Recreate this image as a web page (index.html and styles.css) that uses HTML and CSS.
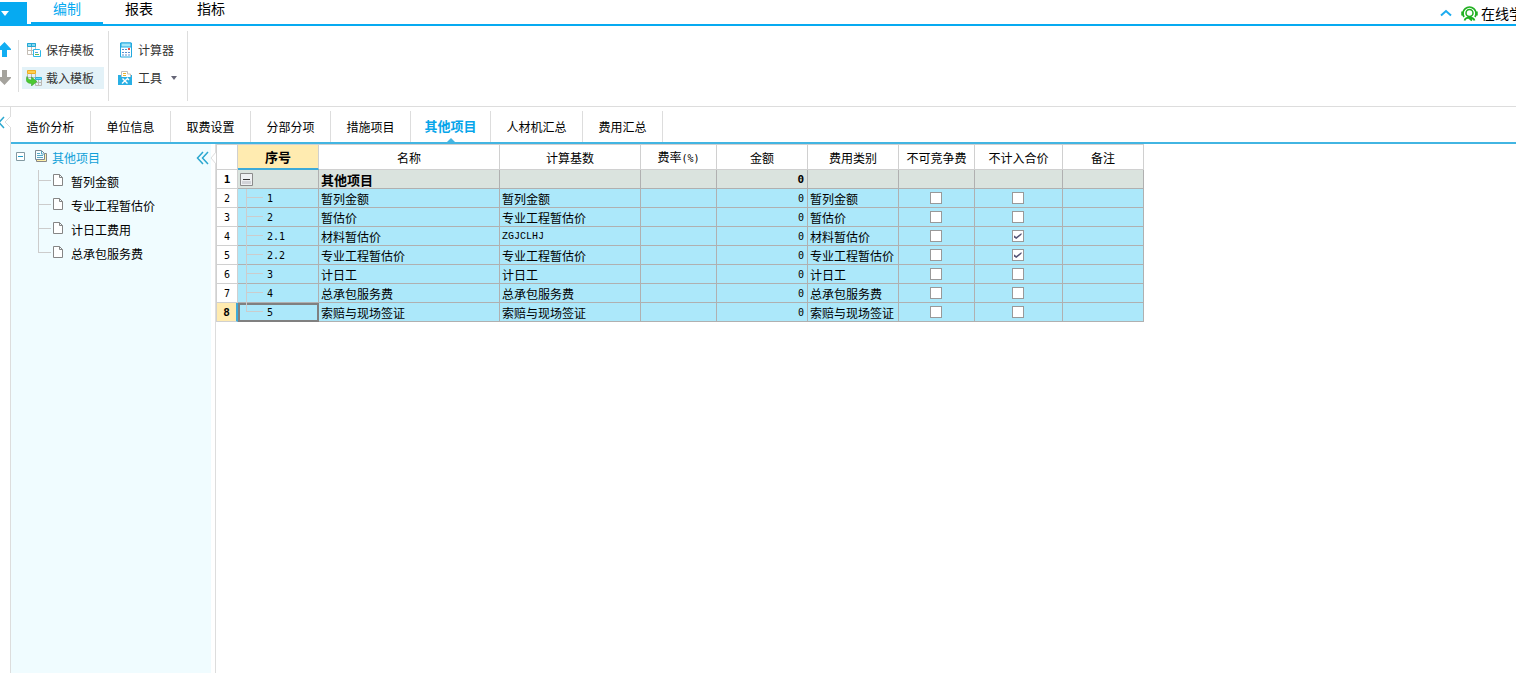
FILE: index.html
```html
<!DOCTYPE html>
<html lang="zh-CN">
<head>
<meta charset="utf-8">
<title>其他项目</title>
<link rel="stylesheet" href="styles.css">
</head>
<body>
<header class="menubar">
  <button class="app-menu" aria-label="菜单"><svg width="9" height="5" viewBox="0 0 9 5"><path d="M0 0h8L4 5z" fill="#fff"/></svg></button>
  <nav class="menu-tabs">
    <button class="menu-tab active">编制</button>
    <button class="menu-tab">报表</button>
    <button class="menu-tab">指标</button>
  </nav>
  <button class="collapse" aria-label="收起"><svg width="12" height="8" viewBox="0 0 12 8"><path d="M1 6.500L6 2l5 4.500" fill="none" stroke="#1cacf0" stroke-width="2"/></svg></button>
  <button class="help">
    <svg width="17" height="17" viewBox="0 0 17 17" fill="none" stroke="#20b020"><path d="M3 12A6.500 6.500 0 1 1 14 12" stroke-width="1.800"/><path d="M1.500 6.500v4M15.500 6.500v4" stroke-width="2.500"/><circle cx="8.500" cy="8" r="3.500" stroke-width="1.500"/><path d="M3.500 15.500c1-3 3-3 5-3s4 0 5 3M8 13l3 2.500" stroke-width="1.800"/></svg>
    <span>在线学</span>
  </button>
</header>

<div class="ribbon">
  <div class="group move">
    <button aria-label="上移"><svg width="11" height="15" viewBox="0 0 11 15"><path d="M4.500 0L11 7v1H7v7H2V8H0V4.500z" fill="#12aef2"/></svg></button>
    <button aria-label="下移"><svg width="11" height="15" viewBox="0 0 11 15"><path d="M4.500 15L11 8V7H7V0H2v7H0v3.500z" fill="#a5a39d"/></svg></button>
  </div>
  <div class="group templates">
    <button class="tool">
      <svg width="16" height="16" viewBox="0 0 16 16"><path d="M1.500 4v8.500H7M5.500 4v8.500M1 8.500h8M9.500 4v3" fill="none" stroke="#c3bdb5"/><path d="M1 1h9v4H1z" fill="#8bd8ee"/><path d="M1.500 1.500h8v3h-8zM5.500 1v3" fill="none" stroke="#22a7d5"/><path d="M7.500 7.500h6l1 1v6h-7z" fill="#fff" stroke="#2cb8e8"/><path d="M9 10.500h3" stroke="#4d9fe0"/><path d="M9 12.500h4" stroke="#62bb4c"/></svg>
      <span>保存模板</span>
    </button>
    <button class="tool selected">
      <svg width="16" height="16" viewBox="0 0 16 16"><path d="M1.500 4v4M5.500 4v4M1 7.500h8M9.500 4v4M9.500 10v5.500h6V10M12.500 10v5.500M9 12.500h6" fill="none" stroke="#bbb8b3"/><path d="M1.500.500h8v3h-8z" fill="#ffce50" stroke="#efae22"/><path d="M9.500 7.500h6v2h-6z" fill="#62d4f7" stroke="#2bafd8"/><path d="M1 6.500c-2 4 0 7 4.500 7V16l5.500-4.500L5.500 7v3C3 10 2 9 1 6.500z" fill="#4bc931" stroke="#2e9d25" stroke-width=".5"/></svg>
      <span>载入模板</span>
    </button>
  </div>
  <div class="group tools">
    <button class="tool">
      <svg width="16" height="16" viewBox="0 0 16 16"><path d="M2.500 1h11v14h-11z" fill="#fff" stroke="#22a9df"/><path d="M3 1h10v4H3z" fill="#a5e7fa" stroke="#22a9df"/><path d="M4 7.500h5M4 10.500h8M4 13h8" stroke="#5790d2" stroke-dasharray="2 1"/><path d="M10 7h2" stroke="#f04b3f" stroke-width="2"/></svg>
      <span>计算器</span>
    </button>
    <button class="tool">
      <svg width="16" height="16" viewBox="0 0 16 16"><path d="M3.500 7V1.500h6V4h3v3" fill="#fff" stroke="#c3c1bd"/><path d="M5 3.500h3M5 5.500h3" stroke="#eab22d"/><path d="M0 5h3v2h10V5h1v10H0z" fill="#29afe4"/><path d="M4.500 8.500l5 5M10 8l-6 5.500M9 8l2 2" stroke="#fff" stroke-width="1.400"/></svg>
      <span>工具</span>
      <svg class="caret" width="6" height="4" viewBox="0 0 6 4"><path d="M0 0h6L3 4z" fill="#667"/></svg>
    </button>
  </div>
</div>

<div class="workspace">
  <div class="gutter">
    <button class="expand" aria-label="展开"><svg width="11" height="20" viewBox="0 0 11 20"><path d="M4 4L-1 9.500 4 15" fill="none" stroke="#2aa7cf" stroke-width="1.500"/><path d="M11 3L5 9l6 6" fill="#fff" stroke="#ddd"/></svg></button>
  </div>
  <div class="content">
    <nav class="tabs">
      <button class="tab">造价分析</button>
      <button class="tab">单位信息</button>
      <button class="tab">取费设置</button>
      <button class="tab">分部分项</button>
      <button class="tab">措施项目</button>
      <button class="tab active">其他项目</button>
      <button class="tab wide">人材机汇总</button>
      <button class="tab">费用汇总</button>
    </nav>
    <div class="panes">
      <aside class="sidebar">
        <div class="root">
          <button class="toggle" aria-label="折叠"><svg width="9" height="9" viewBox="0 0 9 9"><path d="M.5.500h8v8h-8z" fill="#fff" stroke="#839aa2"/><path d="M2 4.500h5" stroke="#1b9dcb"/></svg></button>
          <svg class="book" width="13" height="13" viewBox="0 0 13 13"><path d="M2.500 3.500h10v8h-10z" fill="#fff0a8" stroke="#888"/><path d="M1.500.500h6l3 3v6h-9z" fill="#f5fcff" stroke="#7c8991"/><path d="M3 3.500h3M3 5.500h6M3 7.500h6M7.500 1v3h3" fill="none" stroke="#55a6c2"/></svg>
          <a href="#root">其他项目</a>
          <button class="hide" aria-label="隐藏"><svg width="13" height="14" viewBox="0 0 13 14"><path d="M7 1L1.500 7 7 13M12 1L6.500 7l5.500 6" fill="none" stroke="#2aa7cf" stroke-width="1.500"/></svg></button>
        </div>
        <ul class="tree">
          <li><svg width="11" height="13" viewBox="0 0 11 13"><path d="M.5.500h6l3 3v8h-9zM6.500.500v3h3" fill="#fff" stroke="#858585"/></svg><a href="#a">暂列金额</a></li>
          <li><svg width="11" height="13" viewBox="0 0 11 13"><path d="M.5.500h6l3 3v8h-9zM6.500.500v3h3" fill="#fff" stroke="#858585"/></svg><a href="#b">专业工程暂估价</a></li>
          <li><svg width="11" height="13" viewBox="0 0 11 13"><path d="M.5.500h6l3 3v8h-9zM6.500.500v3h3" fill="#fff" stroke="#858585"/></svg><a href="#c">计日工费用</a></li>
          <li><svg width="11" height="13" viewBox="0 0 11 13"><path d="M.5.500h6l3 3v8h-9zM6.500.500v3h3" fill="#fff" stroke="#858585"/></svg><a href="#d">总承包服务费</a></li>
        </ul>
      </aside>
      <main class="main">
        <svg class="notch" width="6" height="14" viewBox="0 0 6 14"><path d="M6 1L1 7l5 6" fill="#fff" stroke="#ddd"/></svg>
        <table class="grid">
          <colgroup><col class="w-row"><col class="w-no"><col class="w-name"><col class="w-base"><col class="w-rate"><col class="w-sum"><col class="w-type"><col class="w-comp"><col class="w-excl"><col class="w-note"></colgroup>
          <thead>
            <tr><th></th><th class="current">序号</th><th>名称</th><th>计算基数</th><th>费率<span class="num">(%)</span></th><th>金额</th><th>费用类别</th><th>不可竞争费</th><th>不计入合价</th><th>备注</th></tr>
          </thead>
          <tbody>
            <tr class="summary"><th>1</th><td class="fold"><button aria-label="折叠"><svg width="13" height="13" viewBox="0 0 13 13"><path d="M.5.500h12v12H.5z" fill="#eef0f2" stroke="#8b8b8b"/><path d="M2 8h9v3H2z" fill="#d2d3d8"/><path d="M3 6.500h7" stroke="#333"/></svg></button></td><td>其他项目</td><td></td><td></td><td class="sum">0</td><td></td><td></td><td></td><td></td></tr>
            <tr><th>2</th><td class="no">1</td><td>暂列金额</td><td>暂列金额</td><td></td><td class="sum">0</td><td>暂列金额</td><td class="check"><input type="checkbox" aria-label="不可竞争费"></td><td class="check"><input type="checkbox" aria-label="不计入合价"></td><td></td></tr>
            <tr><th>3</th><td class="no">2</td><td>暂估价</td><td>专业工程暂估价</td><td></td><td class="sum">0</td><td>暂估价</td><td class="check"><input type="checkbox" aria-label="不可竞争费"></td><td class="check"><input type="checkbox" aria-label="不计入合价"></td><td></td></tr>
            <tr><th>4</th><td class="no">2.1</td><td>材料暂估价</td><td class="code">ZGJCLHJ</td><td></td><td class="sum">0</td><td>材料暂估价</td><td class="check"><input type="checkbox" aria-label="不可竞争费"></td><td class="check"><input type="checkbox" aria-label="不计入合价" checked></td><td></td></tr>
            <tr><th>5</th><td class="no">2.2</td><td>专业工程暂估价</td><td>专业工程暂估价</td><td></td><td class="sum">0</td><td>专业工程暂估价</td><td class="check"><input type="checkbox" aria-label="不可竞争费"></td><td class="check"><input type="checkbox" aria-label="不计入合价" checked></td><td></td></tr>
            <tr><th>6</th><td class="no">3</td><td>计日工</td><td>计日工</td><td></td><td class="sum">0</td><td>计日工</td><td class="check"><input type="checkbox" aria-label="不可竞争费"></td><td class="check"><input type="checkbox" aria-label="不计入合价"></td><td></td></tr>
            <tr><th>7</th><td class="no">4</td><td>总承包服务费</td><td>总承包服务费</td><td></td><td class="sum">0</td><td>总承包服务费</td><td class="check"><input type="checkbox" aria-label="不可竞争费"></td><td class="check"><input type="checkbox" aria-label="不计入合价"></td><td></td></tr>
            <tr class="selected"><th>8</th><td class="no">5</td><td>索赔与现场签证</td><td>索赔与现场签证</td><td></td><td class="sum">0</td><td>索赔与现场签证</td><td class="check"><input type="checkbox" aria-label="不可竞争费"></td><td class="check"><input type="checkbox" aria-label="不计入合价"></td><td></td></tr>
          </tbody>
        </table>
      </main>
    </div>
  </div>
</div>
</body>
</html>
```

FILE: styles.css
```css
* { box-sizing: border-box; }
body {
  margin: 0;
  min-height: 100vh;
  display: flex;
  flex-direction: column;
  background: #fff;
  color: #000;
  font: 12px/16px "Noto Sans CJK SC", sans-serif;
  overflow-x: hidden;
}
button {
  padding: 0;
  border: 0;
  background: none;
  color: inherit;
  font: inherit;
  white-space: nowrap;
}
svg { display: block; flex: none; }
a { color: inherit; text-decoration: none; }

/* Menu bar */
.menubar {
  display: flex;
  height: 26px;
  border-bottom: 2px solid #06aaf1;
  font-size: 14px;
}
.app-menu { width: 27px; margin-top: 2px; padding-left: 1px; background: #06aaf1; }
.menu-tabs { display: flex; margin-left: 4px; }
.menu-tab { width: 72px; padding-bottom: 6px; border-bottom: 2px solid transparent; }
.menu-tab.active { color: #06aaf1; border-color: #06aaf1; }
.collapse { margin: 2px 9px 0 auto; }
.help {
  display: flex;
  align-items: center;
  gap: 3px;
  width: 55px;
  padding-top: 2px;
  overflow: hidden;
}

/* Ribbon */
.ribbon {
  display: flex;
  padding: 5px 0;
  border-bottom: 1px solid #ddd;
  color: #333;
}
.group {
  display: flex;
  flex-direction: column;
  align-items: stretch;
  gap: 6px;
  padding: 8px 4px 12px;
  border-right: 1px solid #ddd;
}
.group.move { width: 19px; gap: 13px; margin: 9px 0; padding: 2px 0 0; }
.group.templates { padding-left: 3px; }
.group.tools { width: 79px; padding-left: 5px; }
.tool { display: flex; align-items: center; gap: 4px; height: 22px; padding: 0 10px 0 4px; }
.tool.selected { background: #e3f2f8; }
.caret { margin-left: 5px; }

/* Workspace */
.workspace { flex: 1; display: flex; }
.gutter { width: 11px; padding-top: 6px; border-right: 1px solid #ddd; }
.content { flex: 1; display: flex; flex-direction: column; min-width: 0; }
.tabs { display: flex; padding-top: 4px; border-bottom: 2px solid #42b5e2; }
.tab { position: relative; width: 80px; height: 31px; border-right: 1px solid #ddd; }
.tab.wide { width: 92px; }
.tab.active { padding-bottom: 2px; color: #06a5ea; font-size: 13px; font-weight: bold; }
.tab.active::after {
  content: "";
  position: absolute;
  left: 50%;
  bottom: 0;
  margin-left: -4px;
  border: 4px solid transparent;
  border-top: 0;
  border-bottom-color: #42b5e2;
}
.panes { flex: 1; display: flex; }

/* Project tree */
.sidebar { width: 200px; background: #f0fcff; }
.root {
  display: flex;
  align-items: center;
  height: 26px;
  padding: 2px 2px 0 5px;
  color: #10a0d8;
}
.toggle, .book { margin-bottom: 3px; }
.book { margin-left: 9px; margin-right: 5px; }
.hide { margin-left: auto; }
.tree {
  position: relative;
  margin: 0;
  padding: 0 0 0 27px;
  list-style: none;
}
.tree::before {
  content: "";
  position: absolute;
  left: 27px;
  top: 0;
  bottom: 14px;
  border-left: 1px solid #ccc;
}
.tree li { display: flex; align-items: center; height: 24px; }
.tree li::before { content: ""; width: 13px; margin: 0 2px 3px 0; border-top: 1px solid #ccc; }
.tree li svg { margin-bottom: 3px; }
.tree a { margin-left: 7px; }

/* Grid */
.main { position: relative; flex: 1; min-width: 0; margin-left: 4px; border-left: 1px solid #ddd; }
.notch { position: absolute; left: -6px; top: 7px; }
.grid {
  table-layout: fixed;
  width: 928px;
  border-collapse: separate;
  border-spacing: 0;
  border-left: 1px solid #d0d0d0;
  line-height: 16px;
}
.w-row { width: 21px; }
.w-no, .w-note { width: 81px; }
.w-name { width: 181px; }
.w-base { width: 141px; }
.w-rate, .w-comp { width: 76px; }
.w-sum, .w-type { width: 91px; }
.w-excl { width: 88px; }
.grid th, .grid td {
  height: 19px;
  padding: 0 2px;
  border: solid #d0d0d0;
  border-width: 0 1px 1px 0;
  font-weight: normal;
  white-space: nowrap;
}
.grid thead th { height: 26px; padding-top: 2px; border-top-width: 1px; }
.grid thead .current {
  padding-top: 0;
  background: #ffebb0;
  border-bottom: 2px solid #3eaad8;
  font-size: 13px;
  font-weight: bold;
}
.grid tbody td { padding-top: 1px; background: #ace8fa; border-color: #b0b0b0; }
.grid tbody th { padding: 1px 0 0; }
.grid tbody th, .grid .no, .grid .sum, .num { font-family: "DejaVu Sans Mono", monospace; font-size: 10px; }
.num { font-size: 10px; }
.grid .code { font-family: "Liberation Mono", monospace; font-size: 10px; }
.grid .summary td { background: #dae3de; font-size: 13px; font-weight: bold; }
.grid .summary th, .grid .selected th { font-weight: bold; font-size: 11px; }
.grid .summary .sum { font-size: 11px; }
.grid .sum { padding-right: 3px; text-align: right; }
.grid .fold { padding: 0 2px; vertical-align: middle; }
.grid .fold button { display: block; }
.grid .no { position: relative; padding-left: 29px; }
.no::before {
  content: "";
  position: absolute;
  left: 8px;
  top: 0;
  bottom: -1px;
  border-left: 1px solid #ccc;
}
.no::after {
  content: "";
  position: absolute;
  left: 8px;
  top: 8px;
  width: 17px;
  border-top: 1px solid #ccc;
}
.selected .no::before { bottom: 9px; }
.grid .selected th { background: #ffebb0; border-right: 2px solid #3eaad8; }
.grid .selected .no { outline: 2px solid #808080; outline-offset: -2px; }
.grid .check { padding: 0 4px 0 2px; }
.check input {
  appearance: none;
  display: block;
  width: 12px;
  height: 12px;
  margin: 0 auto;
  border: 1px solid #999;
  background: #fff;
}
.check input:checked::after {
  content: "";
  display: block;
  width: 8px;
  height: 6px;
  margin: 2px 1px;
  background: #557;
  clip-path: polygon(0 35%, 35% 65%, 100% 0, 100% 30%, 35% 100%, 0 70%);
}
```
